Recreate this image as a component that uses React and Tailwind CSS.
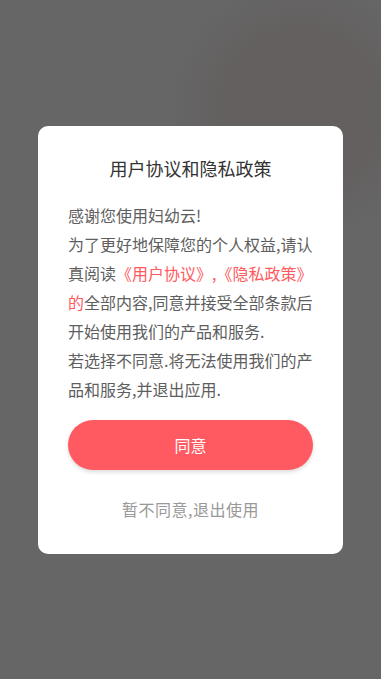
import React from "react";

const App = () => {
  return (
    <div
      className="w-[381px] h-[679px] flex items-center justify-center bg-[#666666] bg-[radial-gradient(circle_at_300px_110px,#646060_0,#646060_80px,#666666_130px)]"
      style={{ fontFamily: '"Noto Sans CJK SC", "Noto Sans", sans-serif' }}
    >
      <div className="w-[305px] bg-white rounded-[10px] px-[30px] pt-[29px] pb-[33px]">
        <h1 className="text-center text-[18px] leading-[26px] text-[#333333]">
          用户协议和隐私政策
        </h1>
        <div className="mt-[20px] text-[16px] leading-[29px] text-[#5e5e5e]">
          <p>感谢您使用妇幼云!</p>
          <p>
            为了更好地保障您的个人权益,请认真阅读
            <span className="text-[#ff5a60]">《用户协议》,《隐私政策》的</span>
            全部内容,同意并接受全部条款后开始使用我们的产品和服务.
          </p>
          <p>若选择不同意.将无法使用我们的产品和服务,并退出应用.</p>
        </div>
        <div className="mt-[16px] h-[50px] rounded-full bg-[#ff5a62] shadow-[0_2px_4px_rgba(0,0,0,0.15)] flex items-center justify-center text-white text-[16px]">
          同意
        </div>
        <div className="mt-[27px] text-center text-[16px] leading-[24px] tracking-[0.5px] text-[#999999]">
          暂不同意,退出使用
        </div>
      </div>
    </div>
  );
};

export default App;
